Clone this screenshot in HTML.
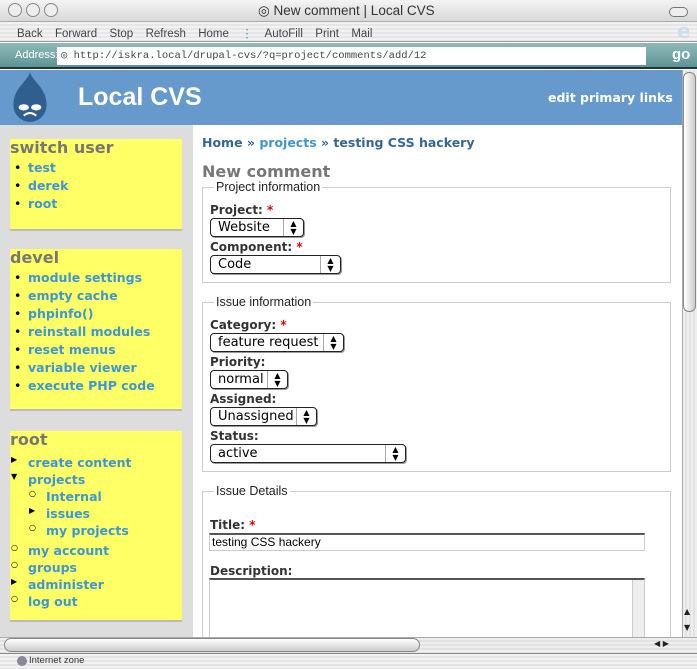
<!DOCTYPE html>
<html><head><style>
*{margin:0;padding:0;box-sizing:border-box}
body{width:697px;height:669px;overflow:hidden;position:relative;background:#fff;font-family:"DejaVu Sans","Liberation Sans",sans-serif}
.a{position:absolute}
.chrome{font-family:"Liberation Sans",sans-serif;color:#333}
.lnk{color:#3d97d3;font-weight:bold;font-size:12.5px}
.blk{position:absolute;left:10px;width:172px;background:#ffff66;border-bottom:2px solid #bbb}
.blk h2{font-size:16px;color:#777;font-weight:bold;line-height:18px}
.lab{position:absolute;left:210px;font-size:12px;font-weight:bold;color:#333}
.lab b{color:#e00}
.sel{position:absolute;left:210px;height:19px;border:1px solid #222;border-radius:4px;background:#fff;font-size:13px;line-height:17px;padding-left:7px;box-shadow:1px 1px 0 #999}
.sel i{position:absolute;right:0;top:0;width:20px;height:17px;border-left:1px solid #aaa;font-style:normal;font-size:8px;line-height:8px;text-align:center;padding-top:1px}
fieldset{position:absolute;left:202px;width:469px;border:1px solid #ccc}
.leg{position:absolute;left:214px;background:#fff;padding:0 2px;font-size:12.5px;color:#222;font-family:"Liberation Sans",sans-serif}
</style></head><body>
<div class="a chrome" style="left:0;top:0;width:697px;height:22px;background:linear-gradient(#f4f4f4,#d8d8d8);border-bottom:1px solid #aaa"></div>
<div class="a" style="left:8px;top:3px;width:14px;height:14px;border-radius:50%;border:1px solid #888;background:#eee"></div>
<div class="a" style="left:26px;top:3px;width:14px;height:14px;border-radius:50%;border:1px solid #888;background:#eee"></div>
<div class="a" style="left:44px;top:3px;width:14px;height:14px;border-radius:50%;border:1px solid #888;background:#eee"></div>
<div class="a chrome" style="left:258px;top:3px;font-size:13.5px">◎ New comment | Local CVS</div>
<div class="a" style="left:669px;top:7px;width:19px;height:10px;border-radius:5px;border:1px solid #777;background:#eee"></div>
<div class="a" style="left:0;top:22px;width:697px;height:20px;background:repeating-linear-gradient(#f2f2f2 0 2px,#e6e6e6 2px 4px);border-bottom:1px solid #999"></div>
<div class="a chrome" style="left:17px;top:26px;font-size:11.5px;word-spacing:3px;color:#444">Back&nbsp; Forward&nbsp; Stop&nbsp; Refresh&nbsp; Home&nbsp; <span style="color:#399">⋮</span>&nbsp; AutoFill&nbsp; Print&nbsp; Mail</div>
<div class="a" style="left:677px;top:19px;font-size:20px;color:#cde;font-weight:bold">e</div>
<div class="a" style="left:0;top:43px;width:697px;height:26px;background:linear-gradient(#8fb9b9,#5e9494);border-bottom:2px solid #234"></div>
<div class="a chrome" style="left:15px;top:49px;font-size:11px;color:#fff">Address:</div>
<div class="a" style="left:57px;top:47px;width:589px;height:18px;background:#fff;font-family:'Liberation Mono',monospace;font-size:10.5px;color:#444;line-height:18px;padding-left:4px">◎ http://iskra.local/drupal-cvs/?q=project/comments/add/12</div>
<div class="a chrome" style="left:672px;top:46px;font-size:15px;color:#fff;font-weight:bold">go</div>
<div class="a" style="left:0;top:70px;width:682px;height:55px;background:#6699cc"></div>
<svg class="a" style="left:10px;top:71px" width="40" height="54" viewBox="0 0 36 52"><path d="M18 1 C20 10 34 16 34 33 A16 16 0 0 1 2 33 C2 16 16 10 18 1Z" fill="#2e5f8e"/><ellipse cx="12" cy="35" rx="5" ry="3" fill="#fff"/><ellipse cx="24" cy="35" rx="5" ry="3" fill="#fff"/><path d="M12 43 Q18 38 24 43" stroke="#fff" stroke-width="2" fill="none"/></svg>
<div class="a" style="left:78px;top:83px;font-size:25px;font-weight:bold;color:#fff;font-family:'Liberation Sans',sans-serif">Local CVS</div>
<div class="a" style="left:548px;top:90px;font-size:12.5px;font-weight:bold;color:#fff">edit primary links</div>
<div class="a" style="left:0;top:125px;width:193px;height:512px;background:#ddd"></div>
<div class="blk" style="top:139px;height:92px"><h2>switch user</h2>
<div class="a" style="left:4px;top:20px;font-size:12.5px;line-height:18px">•<br>•<br>•</div>
<div class="a lnk" style="left:18px;top:20px;line-height:18px">test<br>derek<br>root</div></div>
<div class="blk" style="top:249px;height:162px"><h2>devel</h2>
<div class="a" style="left:4px;top:20px;font-size:12.5px;line-height:18px">•<br>•<br>•<br>•<br>•<br>•<br>•</div>
<div class="a lnk" style="left:18px;top:20px;line-height:18px">module settings<br>empty cache<br>phpinfo()<br>reinstall modules<br>reset menus<br>variable viewer<br>execute PHP code</div></div>
<div class="blk" style="top:431px;height:191px"><h2>root</h2>
<div class="a" style="left:1px;top:20px;font-size:8px;line-height:17px;color:#000">▶<br>▼</div>
<div class="a" style="left:19px;top:54px;font-size:8px;line-height:17px;color:#000">○<br>▶<br>○</div>
<div class="a" style="left:1px;top:108px;font-size:8px;line-height:17px;color:#000">○<br>○<br>▶<br>○</div>
<div class="a lnk" style="left:18px;top:23px;line-height:17px">create content<br>projects</div>
<div class="a lnk" style="left:36px;top:57px;line-height:17px">Internal<br>issues<br>my projects</div>
<div class="a lnk" style="left:18px;top:111px;line-height:17px">my account<br>groups<br>administer<br>log out</div></div>
<div class="a" style="left:202px;top:135px;font-size:12.5px;font-weight:bold;color:#369">Home » <span style="color:#3d97d3">projects</span> » testing CSS hackery</div>
<div class="a" style="left:202px;top:162px;font-size:16px;font-weight:bold;color:#777">New comment</div>
<fieldset style="top:187px;height:96px"></fieldset><div class="leg" style="top:180px">Project information</div>
<div class="lab" style="top:203px">Project: <b>*</b></div>
<div class="sel" style="top:218px;width:94px">Website<i>▲<br>▼</i></div>
<div class="lab" style="top:240px">Component: <b>*</b></div>
<div class="sel" style="top:255px;width:131px">Code<i>▲<br>▼</i></div>
<fieldset style="top:302px;height:170px"></fieldset><div class="leg" style="top:295px">Issue information</div>
<div class="lab" style="top:318px">Category: <b>*</b></div>
<div class="sel" style="top:333px;width:134px">feature request<i>▲<br>▼</i></div>
<div class="lab" style="top:355px">Priority:</div>
<div class="sel" style="top:370px;width:78px">normal<i>▲<br>▼</i></div>
<div class="lab" style="top:392px">Assigned:</div>
<div class="sel" style="top:407px;width:107px">Unassigned<i>▲<br>▼</i></div>
<div class="lab" style="top:429px">Status:</div>
<div class="sel" style="top:444px;width:196px">active<i>▲<br>▼</i></div>
<fieldset style="top:491px;height:160px"></fieldset><div class="leg" style="top:484px">Issue Details</div>
<div class="lab" style="top:518px">Title: <b>*</b></div>
<div class="a" style="left:209px;top:533px;width:436px;height:18px;border:1px solid #ccc;border-top:2px solid #555;font-family:'Liberation Sans',sans-serif;font-size:12px;line-height:14px;padding-left:2px">testing CSS hackery</div>
<div class="lab" style="top:564px">Description:</div>
<div class="a" style="left:209px;top:578px;width:436px;height:70px;border:1px solid #ccc;border-top:2px solid #555"><div class="a" style="right:0;top:0;width:12px;height:70px;background:#eee;border-left:1px solid #ccc"></div></div>
<div class="a" style="left:682px;top:70px;width:15px;height:567px;background:repeating-linear-gradient(90deg,#eee 0 2px,#e2e2e2 2px 4px);border-left:1px solid #aaa"></div>
<div class="a" style="left:683px;top:72px;width:13px;height:240px;border-radius:6px;background:linear-gradient(90deg,#fff,#ccc);border:1px solid #888"></div>
<div class="a" style="left:684px;top:604px;font-size:8px;line-height:16px;color:#222">▲<br>▼</div>
<div class="a" style="left:0;top:637px;width:697px;height:16px;background:repeating-linear-gradient(#eee 0 2px,#e2e2e2 2px 4px);border-top:1px solid #aaa"></div>
<div class="a" style="left:4px;top:638px;width:416px;height:14px;border-radius:7px;background:linear-gradient(#fff,#ccc);border:1px solid #888"></div>
<div class="a" style="left:654px;top:639px;font-size:8px;color:#222">◀ ▶</div>
<div class="a" style="left:0;top:653px;width:697px;height:16px;background:repeating-linear-gradient(#f2f2f2 0 2px,#e4e4e4 2px 4px);border-top:1px solid #888"></div>
<div class="a" style="left:17px;top:656px;width:10px;height:10px;border-radius:50%;background:#889"></div>
<div class="a chrome" style="left:29px;top:655px;font-size:9.5px">Internet zone</div>
</body></html>
